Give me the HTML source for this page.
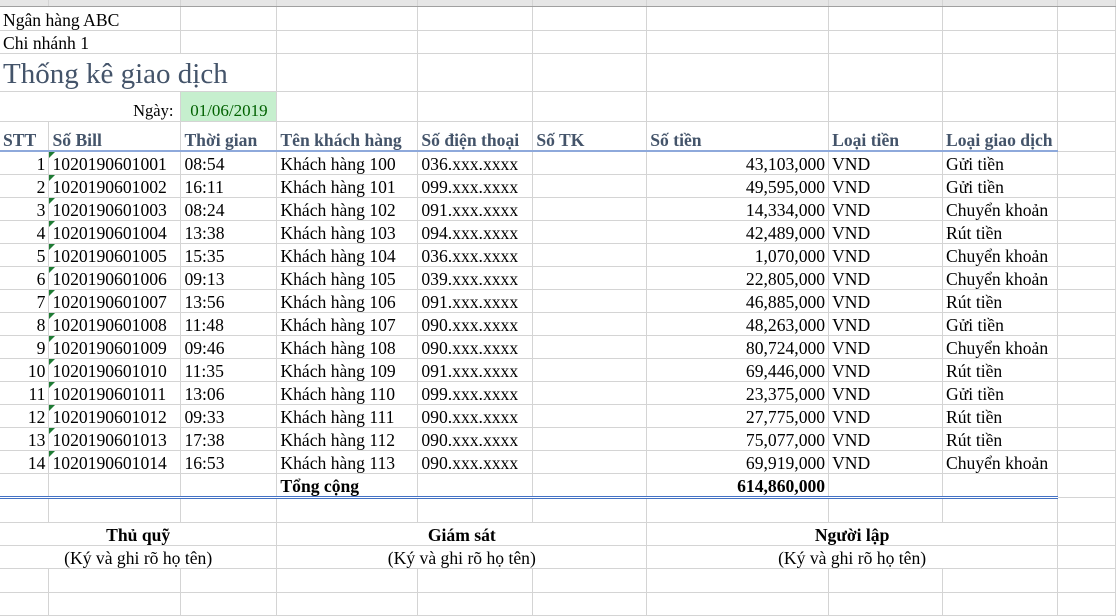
<!DOCTYPE html>
<html><head><meta charset="utf-8"><style>
body{margin:0;width:1116px;height:616px;overflow:hidden;background:#fff;font-family:"Liberation Serif",serif;font-size:17.6px;color:#000}
table{border-collapse:collapse;table-layout:fixed;position:absolute;left:0;top:0}
td{border-right:1px solid #d4d4d4;border-bottom:1px solid #d4d4d4;padding:0 3px;white-space:nowrap;overflow:visible;vertical-align:bottom;line-height:20px;height:22px}
tr.hd td{background:#e6e6e6;border-bottom:1px solid #a0a0a0;height:6px;line-height:6px;padding:0}
.r{text-align:right}.c{text-align:center}
.h td{font-weight:bold;color:#44546a;height:28px;border-bottom:2px solid #8ea9db}
.h td:last-child{border-bottom:1px solid #d4d4d4}
.b{position:relative}
.b:before{content:"";position:absolute;left:0;top:0;border-top:6px solid #1e7b34;border-right:6px solid transparent}
.tot td{border-top:1px solid #4472c4;border-bottom:3px double #4472c4;font-weight:bold}
.tot td:last-child{border-top:none;border-bottom:1px solid #d4d4d4}
</style></head><body>
<table>
<colgroup><col style="width:49px"><col style="width:132px"><col style="width:96px"><col style="width:141px"><col style="width:115px"><col style="width:114px"><col style="width:182px"><col style="width:114px"><col style="width:115px"><col style="width:58px"></colgroup>
<tr class="hd"><td></td><td></td><td></td><td></td><td></td><td></td><td></td><td></td><td></td><td></td></tr>
<tr><td colspan="2" style="height:23px">Ngân hàng ABC</td><td></td><td></td><td></td><td></td><td></td><td></td><td></td><td></td></tr>
<tr><td colspan="2" style="height:21px">Chi nhánh 1</td><td></td><td></td><td></td><td></td><td></td><td></td><td></td><td></td></tr>
<tr><td colspan="3" style="height:37px;font-size:29px;color:#44546a;line-height:34px">Thống kê giao dịch</td><td></td><td></td><td></td><td></td><td></td><td></td><td></td></tr>
<tr><td colspan="2" class="r" style="height:29px;padding-right:7px;font-size:16.5px">Ngày:</td><td class="c" style="background:#c6efce;color:#006100;font-size:17px">01/06/2019</td><td></td><td></td><td></td><td></td><td></td><td></td><td></td></tr>
<tr class="h"><td>STT</td><td>Số Bill</td><td>Thời gian</td><td>Tên khách hàng</td><td>Số điện thoại</td><td>Số TK</td><td>Số tiền</td><td>Loại tiền</td><td>Loại giao dịch</td><td></td></tr>
<tr><td class="r">1</td><td class="b">1020190601001</td><td>08:54</td><td>Khách hàng 100</td><td>036.xxx.xxxx</td><td></td><td class="r">43,103,000</td><td>VND</td><td>Gửi tiền</td><td></td></tr>
<tr><td class="r">2</td><td class="b">1020190601002</td><td>16:11</td><td>Khách hàng 101</td><td>099.xxx.xxxx</td><td></td><td class="r">49,595,000</td><td>VND</td><td>Gửi tiền</td><td></td></tr>
<tr><td class="r">3</td><td class="b">1020190601003</td><td>08:24</td><td>Khách hàng 102</td><td>091.xxx.xxxx</td><td></td><td class="r">14,334,000</td><td>VND</td><td>Chuyển khoản</td><td></td></tr>
<tr><td class="r">4</td><td class="b">1020190601004</td><td>13:38</td><td>Khách hàng 103</td><td>094.xxx.xxxx</td><td></td><td class="r">42,489,000</td><td>VND</td><td>Rút tiền</td><td></td></tr>
<tr><td class="r">5</td><td class="b">1020190601005</td><td>15:35</td><td>Khách hàng 104</td><td>036.xxx.xxxx</td><td></td><td class="r">1,070,000</td><td>VND</td><td>Chuyển khoản</td><td></td></tr>
<tr><td class="r">6</td><td class="b">1020190601006</td><td>09:13</td><td>Khách hàng 105</td><td>039.xxx.xxxx</td><td></td><td class="r">22,805,000</td><td>VND</td><td>Chuyển khoản</td><td></td></tr>
<tr><td class="r">7</td><td class="b">1020190601007</td><td>13:56</td><td>Khách hàng 106</td><td>091.xxx.xxxx</td><td></td><td class="r">46,885,000</td><td>VND</td><td>Rút tiền</td><td></td></tr>
<tr><td class="r">8</td><td class="b">1020190601008</td><td>11:48</td><td>Khách hàng 107</td><td>090.xxx.xxxx</td><td></td><td class="r">48,263,000</td><td>VND</td><td>Gửi tiền</td><td></td></tr>
<tr><td class="r">9</td><td class="b">1020190601009</td><td>09:46</td><td>Khách hàng 108</td><td>090.xxx.xxxx</td><td></td><td class="r">80,724,000</td><td>VND</td><td>Chuyển khoản</td><td></td></tr>
<tr><td class="r">10</td><td class="b">1020190601010</td><td>11:35</td><td>Khách hàng 109</td><td>091.xxx.xxxx</td><td></td><td class="r">69,446,000</td><td>VND</td><td>Rút tiền</td><td></td></tr>
<tr><td class="r">11</td><td class="b">1020190601011</td><td>13:06</td><td>Khách hàng 110</td><td>099.xxx.xxxx</td><td></td><td class="r">23,375,000</td><td>VND</td><td>Gửi tiền</td><td></td></tr>
<tr><td class="r">12</td><td class="b">1020190601012</td><td>09:33</td><td>Khách hàng 111</td><td>090.xxx.xxxx</td><td></td><td class="r">27,775,000</td><td>VND</td><td>Rút tiền</td><td></td></tr>
<tr><td class="r">13</td><td class="b">1020190601013</td><td>17:38</td><td>Khách hàng 112</td><td>090.xxx.xxxx</td><td></td><td class="r">75,077,000</td><td>VND</td><td>Rút tiền</td><td></td></tr>
<tr><td class="r">14</td><td class="b">1020190601014</td><td>16:53</td><td>Khách hàng 113</td><td>090.xxx.xxxx</td><td></td><td class="r">69,919,000</td><td>VND</td><td>Chuyển khoản</td><td></td></tr>
<tr class="tot"><td style="height:20px"></td><td></td><td></td><td>Tổng cộng</td><td></td><td></td><td class="r">614,860,000</td><td></td><td></td><td></td></tr>
<tr><td style="height:23px"></td><td></td><td></td><td></td><td></td><td></td><td></td><td></td><td></td><td></td></tr>
<tr><td colspan="3" class="c" style="font-weight:bold">Thủ quỹ</td><td colspan="3" class="c" style="font-weight:bold">Giám sát</td><td colspan="3" class="c" style="font-weight:bold">Người lập</td><td></td></tr>
<tr><td colspan="3" class="c">(Ký và ghi rõ họ tên)</td><td colspan="3" class="c">(Ký và ghi rõ họ tên)</td><td colspan="3" class="c">(Ký và ghi rõ họ tên)</td><td></td></tr>
<tr><td style="height:23px"></td><td></td><td></td><td></td><td></td><td></td><td></td><td></td><td></td><td></td></tr>
<tr><td></td><td></td><td></td><td></td><td></td><td></td><td></td><td></td><td></td><td></td></tr>
</table>
</body></html>
